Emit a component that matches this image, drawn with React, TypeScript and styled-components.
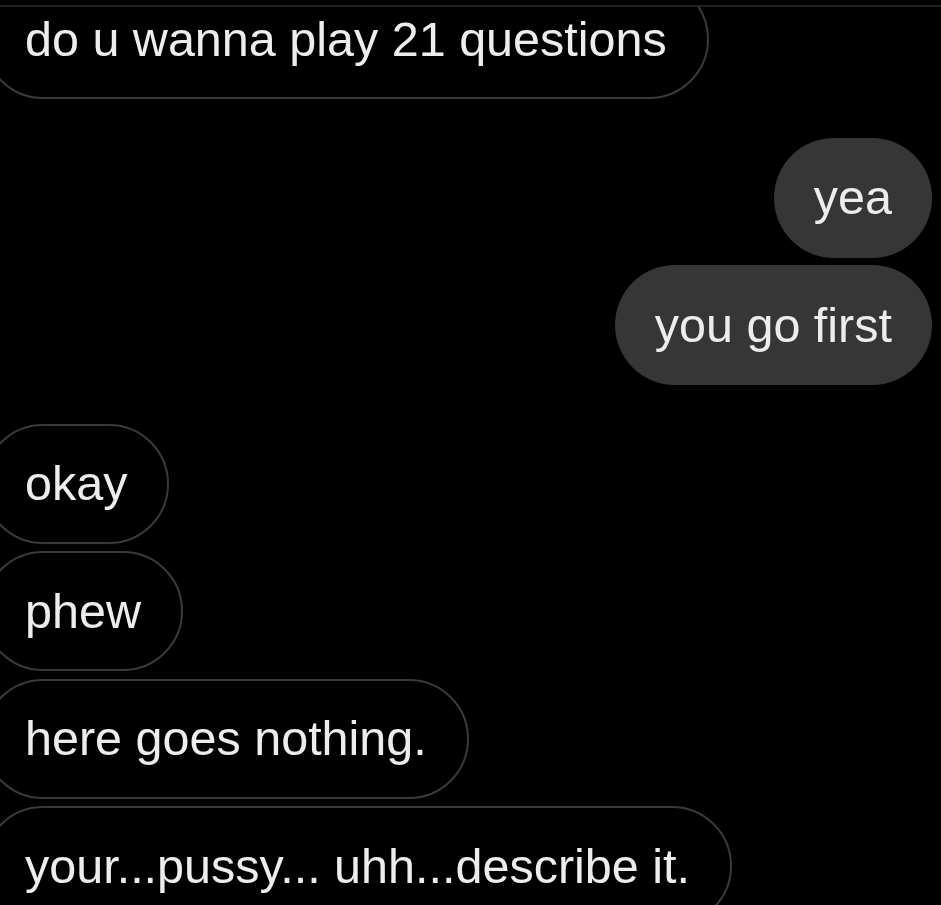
import React from "react";
import styled, { createGlobalStyle } from "styled-components";

const Global = createGlobalStyle`
  html, body {
    margin: 0;
    padding: 0;
    background: #000;
  }
  * { box-sizing: border-box; }
`;

const Screen = styled.div`
  width: 941px;
  height: 905px;
  background: #000;
  display: flex;
  flex-direction: column;
  overflow: hidden;
  font-family: "Liberation Sans", Arial, Helvetica, sans-serif;
`;

const Header = styled.div`
  height: 7px;
  flex: none;
  border-bottom: 2px solid #222222;
  background: #000;
`;

const Viewport = styled.div`
  flex: 1;
  overflow: hidden;
  position: relative;
`;

const Thread = styled.div`
  display: flex;
  flex-direction: column;
  margin-top: -28px;
  padding-right: 9px;
`;

const Group = styled.div<{ $mine?: boolean }>`
  display: flex;
  flex-direction: column;
  align-items: ${(p) => (p.$mine ? "flex-end" : "flex-start")};
  gap: 7.5px;
  & + & {
    margin-top: 38.5px;
  }
`;

const Bubble = styled.div<{ $mine?: boolean }>`
  height: 120px;
  display: flex;
  align-items: center;
  padding: 0 40px;
  border-radius: 60px;
  font-size: 48.5px;
  line-height: 49px;
  color: #ededed;
  white-space: nowrap;
  background: ${(p) => (p.$mine ? "#363636" : "#000")};
  border: ${(p) => (p.$mine ? "none" : "2px solid #3a3a3a")};
  margin-left: ${(p) => (p.$mine ? "0" : "-17px")};
`;

type Msg = { text: string };
const threads: { mine: boolean; msgs: Msg[] }[] = [
  { mine: false, msgs: [{ text: "do u wanna play 21 questions" }] },
  { mine: true, msgs: [{ text: "yea" }, { text: "you go first" }] },
  {
    mine: false,
    msgs: [
      { text: "okay" },
      { text: "phew" },
      { text: "here goes nothing." },
      { text: "your...pussy... uhh...describe it." },
    ],
  },
];

export default function App() {
  return (
    <>
      <Global />
      <Screen>
        <Header />
        <Viewport>
          <Thread>
            {threads.map((g, i) => (
              <Group key={i} $mine={g.mine}>
                {g.msgs.map((m, j) => (
                  <Bubble key={j} $mine={g.mine}>
                    {m.text}
                  </Bubble>
                ))}
              </Group>
            ))}
          </Thread>
        </Viewport>
      </Screen>
    </>
  );
}
